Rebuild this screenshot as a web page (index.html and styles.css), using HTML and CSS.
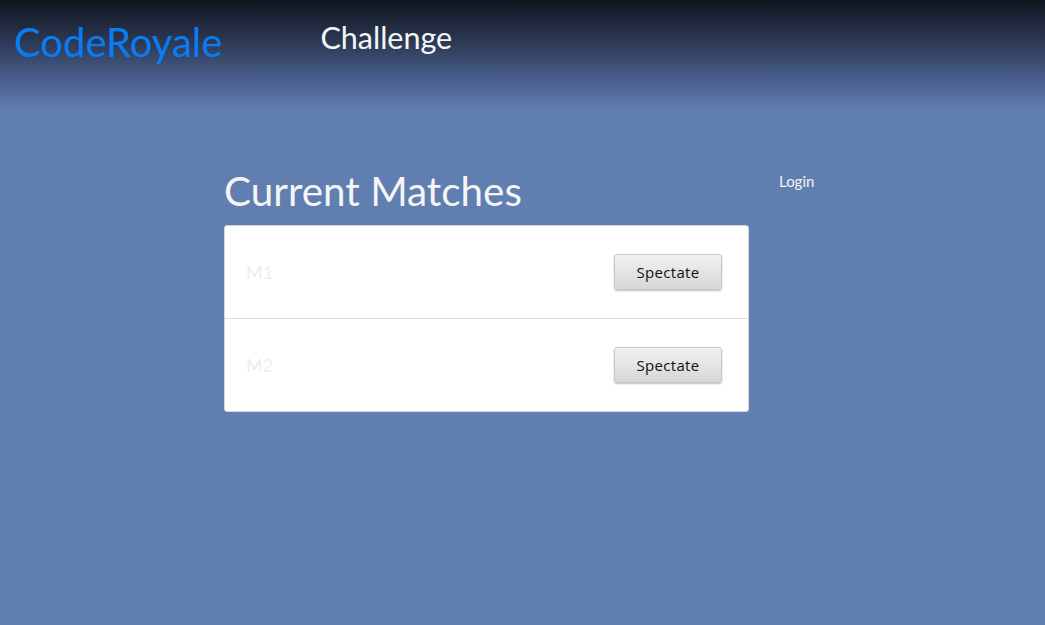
FILE: index.html
```html
<!DOCTYPE html>
<html>
<head>
<meta charset="utf-8">
<link rel="stylesheet" href="styles.css">
</head>
<body>
<header class="topbar">
  <div class="brand">CodeRoyale</div>
  <nav class="nav"><span class="nav-item">Challenge</span></nav>
</header>
<main class="content">
  <section class="matches">
    <h1 class="title">Current Matches</h1>
    <div class="card">
      <div class="row">
        <span class="match-name">M1</span>
        <button class="btn">Spectate</button>
      </div>
      <div class="row">
        <span class="match-name">M2</span>
        <button class="btn">Spectate</button>
      </div>
    </div>
  </section>
  <aside class="side">
    <span class="login">Login</span>
  </aside>
</main>
</body>
</html>
```
FILE: styles.css
```css
html, body {
  margin: 0;
  padding: 0;
  height: 100%;
}
body {
  background: #607eb0;
  font-family: Lato, "Open Sans", sans-serif;
  color: #f5f5f5;
}
.topbar {
  height: 110px;
  background: linear-gradient(to bottom, #10141d 0%, #2a3650 35%, #4a6190 75%, #607eb0 100%);
  display: flex;
  align-items: flex-start;
  padding-left: 14px;
}
.brand {
  font-size: 40px;
  color: #0a7cf2;
  margin-top: 19px;
  line-height: 46px;
}
.nav {
  margin-left: 98px;
  margin-top: 17px;
}
.nav-item {
  font-size: 30.5px;
  line-height: 40px;
  color: #f5f5f5;
}
.content {
  display: flex;
  padding-left: 224px;
  padding-top: 58px;
}
.matches {
  width: 525px;
}
.title {
  margin: 0 0 11px 0;
  font-weight: normal;
  font-size: 40.4px;
  line-height: 46px;
  color: #f5f5f5;
}
.card {
  background: #fff;
  border: 1px solid #d6d6d6;
  border-radius: 3px;
  box-sizing: border-box;
}
.row {
  height: 92px;
  display: flex;
  align-items: center;
  justify-content: space-between;
  padding: 0 26px 0 21px;
}
.row + .row {
  border-top: 1px solid #dddddd;
}
.match-name {
  font-size: 18px;
  color: #eeeeee;
  margin-top: -1px;
}
.btn {
  width: 108px;
  height: 36px;
  font-family: "Open Sans", sans-serif;
  font-size: 15px;
  letter-spacing: 0.3px;
  color: #111;
  background: linear-gradient(to bottom, #f2f2f2, #d6d6d6);
  border: 1px solid #c8c8c8;
  border-radius: 3px;
  box-shadow: 0 1px 2px rgba(0,0,0,0.25);
  padding: 0;
}
.side {
  margin-left: 30px;
  padding-top: 2px;
}
.login {
  font-size: 15px;
  color: #f5f5f5;
  line-height: 22px;
}
```
